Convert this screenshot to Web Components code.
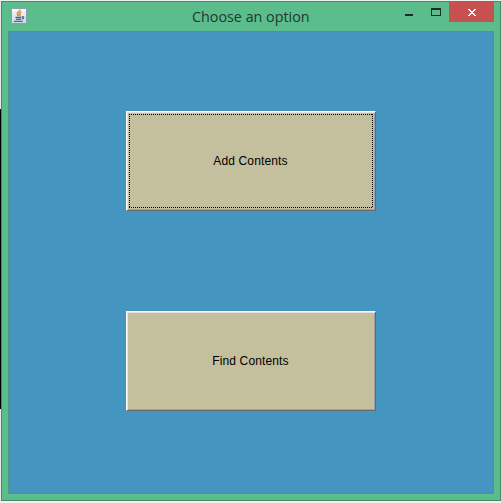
<!DOCTYPE html>
<html lang="en">
<head>
<meta charset="utf-8">
<title>Choose an option</title>
<style>
html, body { margin: 0; height: 100%; overflow: hidden; }
body { padding-top: 1px; box-sizing: border-box; background: linear-gradient(#e9ebea 0 109px, #000 109px 409px, #ececec 409px); background-size: 1px 100%; background-repeat: no-repeat; background-color: #eef2f0; }
</style>
</head>
<body>
<app-window caption="Choose an option">
  <option-button focused>Add Contents</option-button>
  <option-button>Find Contents</option-button>
</app-window>
<script>
class JavaIcon extends HTMLElement {
  constructor() {
    super();
    this.attachShadow({ mode: 'open' }).innerHTML = `
      <style>:host{display:block;width:16px;height:16px} svg{display:block}</style>
      <svg width="16" height="16" viewBox="0 0 16 16" fill="none">
        <defs><linearGradient id="g" x2="0" y2="1"><stop stop-color="#f8fafb"/><stop offset="1" stop-color="#cbd6e2"/></linearGradient></defs>
        <rect x=".5" y=".5" width="15" height="15" rx="1" fill="url(#g)" stroke="#8b9eaa"/>
        <path d="M8.9 1.6C9.7 3.5 5.3 4.1 6.3 6.1L7.4 8.2M10.4 4.1C8 5 8 5.8 8.8 6.7C9.2 7.4 8.9 8 8.5 8.4" stroke="#e5802d" stroke-width="1.5"/>
        <path d="M4.5 9.5H10.4M5.2 11.4H10M3 13.4H11.7M11 8.9C13.3 8.2 13.2 10.6 11 11" stroke="#426a8c" stroke-width="1.3"/>
      </svg>`;
  }
}
customElements.define('java-icon', JavaIcon);

class WindowControls extends HTMLElement {
  constructor() {
    super();
    this.attachShadow({ mode: 'open' }).innerHTML = `
      <style>
        :host{display:flex;height:20px}
        span{display:block;width:27px;height:20px}
        .close{width:45px;background:#c75050}
        svg{display:block}
      </style>
      <span><svg width="27" height="20"><path fill="#222b27" d="M10 12h8v2h-8z"/></svg></span>
      <span><svg width="27" height="20"><path fill="#222b27" fill-rule="evenodd" d="M9 6h10v8H9zM10 8v5h8V8z"/></svg></span>
      <span class="close"><svg width="45" height="20" shape-rendering="crispEdges"><path fill="#fff" d="M19 7h2v1h1v1h2v-1h1v-1h2v1h-1v1h-1v1h-1v1h1v1h1v1h1v1h-2v-1h-1v-1h-2v1h-1v1h-2v-1h1v-1h1v-1h1v-1h-1v-1h-1v-1h-1z"/></svg></span>`;
  }
}
customElements.define('window-controls', WindowControls);

class OptionButton extends HTMLElement {
  constructor() {
    super();
    this.attachShadow({ mode: 'open' }).innerHTML = `
      <style>
        :host{display:block;width:250px;height:100px}
        button{all:unset;box-sizing:border-box;width:100%;height:100%;display:grid;padding:1px;background:#c4bf9c;
          border:1px solid;border-color:#fff #696969 #696969 #fff;
          box-shadow:inset 1px 1px #e3e3e3,inset -1px -1px #a0a0a0;
          font:12px "Liberation Sans",Arial,sans-serif;letter-spacing:.13px;color:#000}
        .face{display:grid;place-items:center;margin:1px;padding-right:1px}
        :host([focused]) .face{
          --h:repeating-linear-gradient(90deg,#000 0 1px,transparent 1px 2px);
          --v:repeating-linear-gradient(#000 0 1px,transparent 1px 2px);
          background:var(--h) top/100% 1px no-repeat,var(--h) bottom/100% 1px no-repeat,
            var(--v) left/1px 100% no-repeat,var(--v) right/1px 100% no-repeat}
      </style>
      <button><span class="face"><slot></slot></span></button>`;
  }
}
customElements.define('option-button', OptionButton);

class AppWindow extends HTMLElement {
  constructor() {
    super();
    this.attachShadow({ mode: 'open' }).innerHTML = `
      <style>
        :host{display:flex;flex-direction:column;box-sizing:border-box;width:500px;height:500px;margin-left:1px;
          border:1px solid #438c67;background:#5bbd8b;padding:0 6px 6px}
        header{display:grid;grid-template-columns:184px 1fr 99px;height:29px;flex:none}
        java-icon{margin:6px 0 0 3px}
        h1{margin:0;padding-top:3px;font:15px/22px "Open Sans","Noto Sans",sans-serif;color:#22372d;white-space:nowrap;
          transform:scaleX(.955);transform-origin:left}
        main{flex:1;box-sizing:border-box;border:1px solid #4c997b;background:#4496c0;
          display:flex;flex-direction:column;gap:100px;padding:79px 0 0 117px}
      </style>
      <header><java-icon></java-icon><h1></h1><window-controls></window-controls></header>
      <main><slot></slot></main>`;
    this.shadowRoot.querySelector('h1').textContent = this.getAttribute('caption');
  }
}
customElements.define('app-window', AppWindow);
</script>
</body>
</html>
